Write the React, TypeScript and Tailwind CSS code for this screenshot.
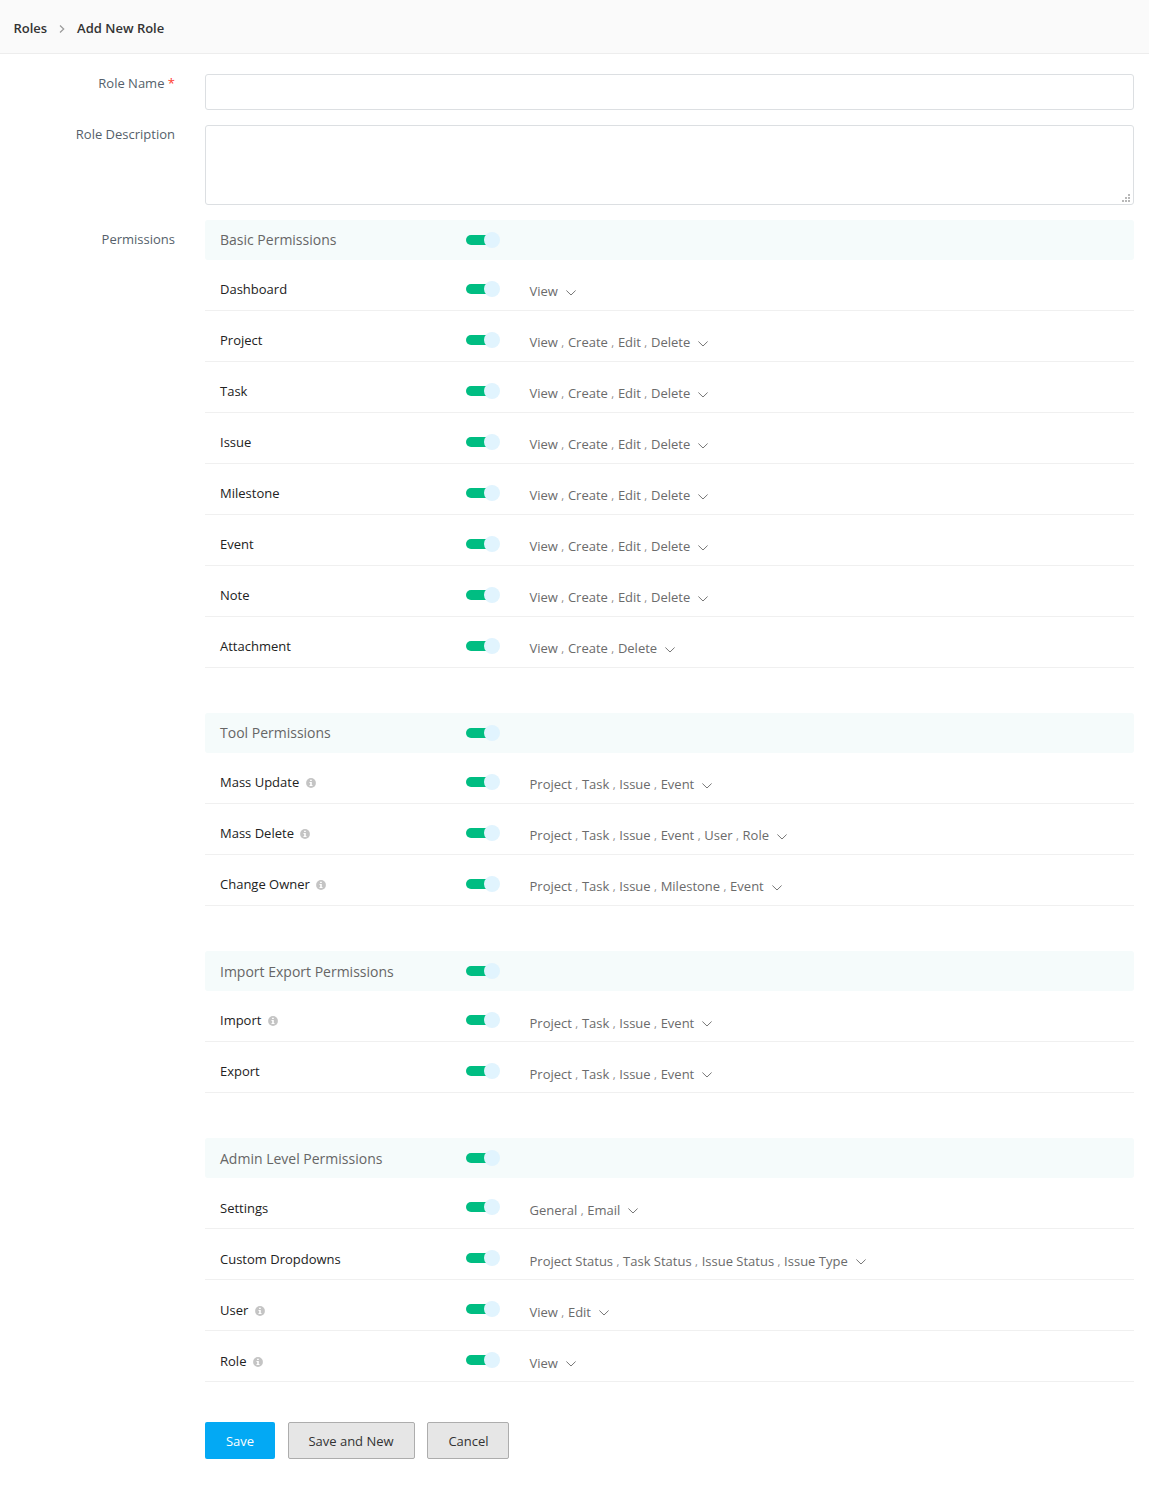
import React, { Fragment } from 'react';

type Row = { name: string; info?: boolean; options: string[] };
type Section = {
  title: string;
  titlePad: string;
  namePad: string;
  optionPad: string;
  chevronMargin: string;
  rows: Row[];
};

const CRUD = ['View', 'Create', 'Edit', 'Delete'];
const RECORDS = ['Project', 'Task', 'Issue', 'Event'];

const sections: Section[] = [
  {
    title: 'Basic Permissions',
    titlePad: 'pt-[10px]',
    namePad: 'pt-[19px]',
    optionPad: 'pt-[21px]',
    chevronMargin: 'mt-[9px]',
    rows: [
      { name: 'Dashboard', options: ['View'] },
      { name: 'Project', options: CRUD },
      { name: 'Task', options: CRUD },
      { name: 'Issue', options: CRUD },
      { name: 'Milestone', options: CRUD },
      { name: 'Event', options: CRUD },
      { name: 'Note', options: CRUD },
      { name: 'Attachment', options: ['View', 'Create', 'Delete'] },
    ],
  },
  {
    title: 'Tool Permissions',
    titlePad: 'pt-[10px]',
    namePad: 'pt-[19px]',
    optionPad: 'pt-[21px]',
    chevronMargin: 'mt-[9px]',
    rows: [
      { name: 'Mass Update', info: true, options: RECORDS },
      { name: 'Mass Delete', info: true, options: [...RECORDS, 'User', 'Role'] },
      { name: 'Change Owner', info: true, options: ['Project', 'Task', 'Issue', 'Milestone', 'Event'] },
    ],
  },
  {
    title: 'Import Export Permissions',
    titlePad: 'pt-[11px]',
    namePad: 'pt-[19px]',
    optionPad: 'pt-[22px]',
    chevronMargin: 'mt-[8px]',
    rows: [
      { name: 'Import', info: true, options: RECORDS },
      { name: 'Export', options: RECORDS },
    ],
  },
  {
    title: 'Admin Level Permissions',
    titlePad: 'pt-[11px]',
    namePad: 'pt-[20px]',
    optionPad: 'pt-[22px]',
    chevronMargin: 'mt-[8px]',
    rows: [
      { name: 'Settings', options: ['General', 'Email'] },
      { name: 'Custom Dropdowns', options: ['Project Status', 'Task Status', 'Issue Status', 'Issue Type'] },
      { name: 'User', info: true, options: ['View', 'Edit'] },
      { name: 'Role', info: true, options: ['View'] },
    ],
  },
];

function Toggle() {
  return (
    <button type="button" role="switch" aria-checked="true" className="block h-4 w-[34px]">
      <svg width="34" height="16" viewBox="0 0 34 16">
        <rect x="0" y="3" width="33" height="10" rx="5" fill="#00bd82" />
        <circle cx="26" cy="8" r="8" fill="#e1f4fe" />
      </svg>
    </button>
  );
}

function InfoIcon() {
  return (
    <svg className="mt-[6px] ml-[6.4px]" width="10" height="10" viewBox="0 0 10 10">
      <circle cx="5" cy="5" r="4.9" fill="#c4c4c4" />
      <path d="M4.1 1.8h1.7v1.3H4.1zM3.5 4.1h2.3v3h.7v1h-3v-1h.7v-2h-.7z" fill="#fff" />
    </svg>
  );
}

function Chevron({ margin }: { margin: string }) {
  return (
    <svg className={`ml-2 ${margin}`} width="10" height="6" viewBox="0 0 10 6" fill="none" stroke="#777" strokeWidth="1">
      <path d="M.4.5 5 5 9.6.5" />
    </svg>
  );
}

function PermissionRow({ row, section }: { row: Row; section: Section }) {
  return (
    <div className="flex h-[51px] border-b border-[#f0f0f0]">
      <div className={`flex w-[261px] pl-[15px] text-[#222] ${section.namePad}`}>
        <span>{row.name}</span>
        {row.info && <InfoIcon />}
      </div>
      <div className="w-[63.5px] pt-[21px]">
        <Toggle />
      </div>
      <div className={`flex whitespace-pre text-[#6b6b6b] ${section.optionPad}`}>
        <span>
          {row.options.map((option, i) => (
            <Fragment key={option}>
              {i > 0 && (
                <>
                  {' '}
                  <span className="mr-[0.36px] text-[11px] leading-none text-[#888]">,</span>{' '}
                </>
              )}
              {option}
            </Fragment>
          ))}
        </span>
        <Chevron margin={section.chevronMargin} />
      </div>
    </div>
  );
}

export default function App() {
  return (
    <div className="min-h-[1488px] w-full bg-white font-['Open_Sans',sans-serif] text-[13px] leading-5 text-[#333]">
      <header className="flex h-[54px] border-b border-[#ededed] bg-[#fafafa] pt-[18px] pl-[13.4px] font-semibold">
        <span>Roles</span>
        <svg className="mt-[7px] mr-[12px] ml-[12px]" width="6" height="8" viewBox="0 0 6 8" fill="none" stroke="#999" strokeWidth="1.2">
          <path d="M1 .5 4.7 4 1 7.5" />
        </svg>
        <span>Add New Role</span>
      </header>

      <form className="pt-5 pr-[15px]">
        <div className="mb-[15px] flex">
          <label className="-mt-px w-[205px] pr-[30px] text-right text-[#555f6b]">
            Role Name <span className="text-[#ff3b30]">*</span>
          </label>
          <input className="h-9 flex-1 rounded-[3px] border border-[#dcdfe2] px-2 outline-none" />
        </div>

        <div className="mb-[15px] flex">
          <label className="-mt-px w-[205px] pr-[30px] text-right text-[#555f6b]">Role Description</label>
          <div className="relative flex-1">
            <textarea className="block h-20 w-full resize-none rounded-[3px] border border-[#dcdfe2] px-2 outline-none" />
            <svg className="absolute right-1 bottom-[3px]" width="8" height="8" viewBox="0 0 8 8" fill="#b8b8b8">
              <path d="M6 0h2v2H6zM3 3h2v2H3zM6 3h2v2H6zM0 6h2v2H0zM3 6h2v2H3zM6 6h2v2H6z" />
            </svg>
          </div>
        </div>

        <div className="flex">
          <div className="w-[205px] pt-[9px] pr-[30px] text-right text-[#555f6b]">Permissions</div>
          <div className="flex-1">
            <div className="flex flex-col gap-[45px]">
              {sections.map((section) => (
                <section key={section.title}>
                  <div className="flex h-10 rounded-[3px] bg-[#f5fbfb]">
                    <h2 className={`w-[261px] pl-[15px] text-[14px] leading-5 text-[#666] ${section.titlePad}`}>
                      {section.title}
                    </h2>
                    <div className="pt-3">
                      <Toggle />
                    </div>
                  </div>
                  {section.rows.map((row) => (
                    <PermissionRow key={row.name} row={row} section={section} />
                  ))}
                </section>
              ))}
            </div>

            <div className="mt-10 flex">
              <button type="button" className="h-[37px] w-[70px] rounded-[2px] bg-[#03a9f4] text-white">
                Save
              </button>
              <button type="button" className="ml-[13px] h-[37px] w-[127px] rounded-[2px] border border-[#adadad] bg-[#e6e6e6] pr-px">
                Save and New
              </button>
              <button type="button" className="ml-3 h-[37px] w-[82px] rounded-[2px] border border-[#adadad] bg-[#e6e6e6] pl-px">
                Cancel
              </button>
            </div>
          </div>
        </div>
      </form>
    </div>
  );
}
